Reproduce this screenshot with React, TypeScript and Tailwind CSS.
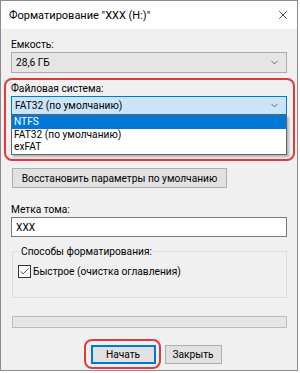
import { Check, ChevronDown, X } from "lucide-react";

const font = { fontFamily: 'Roboto, "Liberation Sans", sans-serif' };

function Combo({ value, active }: { value: string; active?: boolean }) {
  return (
    <div
      className={
        active
          ? "flex h-[19px] items-center justify-between border border-[#0078d7] bg-[#cce4f7] pl-[3px] pr-[6px]"
          : "flex h-[21px] items-center justify-between border border-[#adadad] bg-[#e5e5e5] pl-[4px] pr-[6px]"
      }
    >
      <span>{value}</span>
      <ChevronDown size={11} strokeWidth={1.5} className="text-[#333]" />
    </div>
  );
}

export default function App() {
  return (
    <div className="h-[373px] w-[300px] bg-white text-[10.2px] leading-[15px] text-black" style={font}>
      <div className="h-[371px] w-[298px] border border-[#8c8c8c] bg-[#f0f0f0]">
        {/* title bar */}
        <div className="flex h-[28px] items-center justify-between bg-white pl-[8px] pr-[7px]">
          <span className="text-[11px]">Форматирование "XXX (H:)"</span>
          <X size={14} strokeWidth={1.2} />
        </div>

        <div className="flex flex-col px-[10px]">
          <span className="mt-[8px]">Емкость:</span>
          <Combo value="28,6 ГБ" />

          {/* file system section, highlighted */}
          <div className="relative mt-[5px] pt-[3px] pb-[6px]">
            <div className="pointer-events-none absolute -left-[7px] -right-[8px] top-0 bottom-0 rounded-[8px] border-2 border-[#e2393f]" />
            <span className="block">Файловая система:</span>
            <Combo value="FAT32 (по умолчанию)" active />
            <div className="border border-[#646464] bg-white leading-[12.7px] shadow-[2px_2px_2px_rgba(0,0,0,0.25)]">
              <div className="bg-[#0078d7] px-[2px] text-white">NTFS</div>
              <div className="px-[2px]">FAT32 (по умолчанию)</div>
              <div className="px-[2px]">exFAT</div>
            </div>
          </div>

          <button className="mt-[7px] ml-[1px] h-[20px] w-[215px] whitespace-nowrap border border-[#adadad] bg-[#e1e1e1] text-center">
            Восстановить параметры по умолчанию
          </button>

          <span className="mt-[14px]">Метка тома:</span>
          <div className="flex h-[20px] items-center border border-[#7a7a7a] bg-white px-[4px]">XXX</div>

          {/* format options group */}
          <fieldset className="mt-[7px] ml-[1px] h-[54px] border border-[#dcdcdc] px-[5px]">
            <legend className="ml-[2px] px-[1px]">Способы форматирования:</legend>
            <label className="mt-[5px] flex items-center gap-[2px]">
              <span className="flex h-[13px] w-[13px] items-center justify-center border border-[#333] bg-white">
                <Check size={11} strokeWidth={1.6} />
              </span>
              <span>Быстрое (очистка оглавления)</span>
            </label>
          </fieldset>

          <div className="mt-[18px] ml-[1px] h-[12px] border border-[#bcbcbc] bg-[#e6e6e6]" />

          {/* bottom buttons */}
          <div className="mt-[17px] flex justify-center gap-[9px] pl-[14px]">
            <div className="relative">
              <div className="pointer-events-none absolute -left-[7px] -right-[5px] -top-[6px] -bottom-[5px] rounded-[8px] border-2 border-[#e2393f]" />
              <button className="h-[19px] w-[65px] border-2 border-[#0078d7] bg-[#e1e1e1]">Начать</button>
            </div>
            <button className="h-[19px] w-[57px] border border-[#adadad] bg-[#e1e1e1]">Закрыть</button>
          </div>
        </div>
      </div>
    </div>
  );
}
